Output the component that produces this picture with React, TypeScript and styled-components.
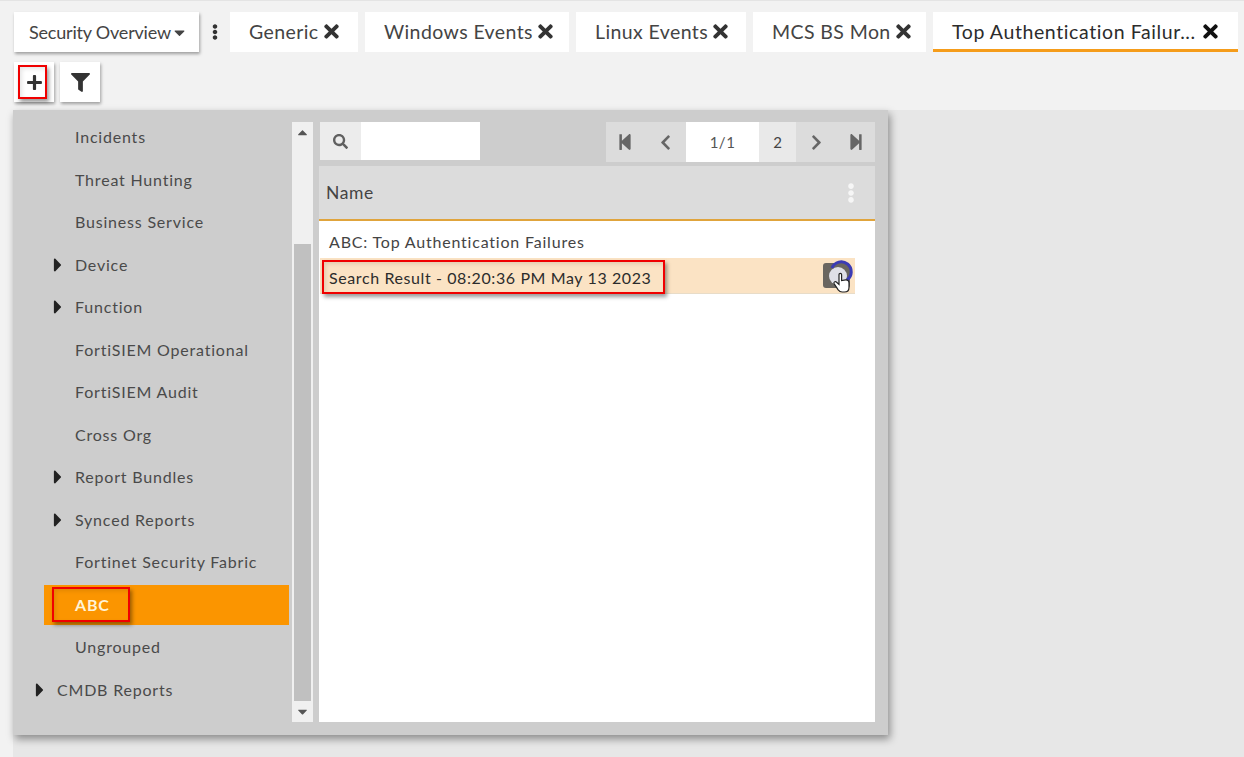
import { createGlobalStyle } from "styled-components"
import styled from "styled-components"
import {
  FaCaretDown,
  FaCaretRight,
  FaCaretUp,
  FaChevronLeft,
  FaChevronRight,
  FaEllipsisV,
  FaFilter,
  FaPlus,
  FaSearch,
  FaStepBackward,
  FaStepForward,
  FaTimes,
} from "react-icons/fa"

const tabs = [
  { label: "Generic", width: 128 },
  { label: "Windows Events", width: 204 },
  { label: "Linux Events", width: 170 },
  { label: "MCS BS Mon", width: 173 },
]

const treeItems = [
  { label: "Incidents" },
  { label: "Threat Hunting" },
  { label: "Business Service" },
  { label: "Device", arrow: true },
  { label: "Function", arrow: true },
  { label: "FortiSIEM Operational" },
  { label: "FortiSIEM Audit" },
  { label: "Cross Org" },
  { label: "Report Bundles", arrow: true },
  { label: "Synced Reports", arrow: true },
  { label: "Fortinet Security Fabric" },
  { label: "ABC", selected: true },
  { label: "Ungrouped" },
  { label: "CMDB Reports", arrow: true, top: true },
]

const App = () => {
  return (
    <>
      <GlobalStyle />
      <Page>
        <TabBar>
          <MenuButton>
            Security Overview
            <FaCaretDown size={17} />
          </MenuButton>
          <Kebab>
            <FaEllipsisV size={16} />
          </Kebab>
          {tabs.map((tab) => (
            <Tab key={tab.label} $width={tab.width}>
              {tab.label}
              <FaTimes size={21} />
            </Tab>
          ))}
          <ActiveTab>
            <span>Top Authentication Failur...</span>
            <FaTimes size={21} />
          </ActiveTab>
        </TabBar>

        <ActionRow>
          <SquareButton>
            <FaPlus size={17} />
            <Callout $left={4} $top={3} $width={29} $height={34} />
          </SquareButton>
          <SquareButton>
            <FaFilter size={19} />
          </SquareButton>
        </ActionRow>

        <Body>
          <Panel>
            <Tree>
              {treeItems.map((item) => (
                <TreeRow key={item.label} $selected={item.selected} $top={item.top}>
                  <TreeLabel>
                    {item.arrow && (
                      <Arrow>
                        <FaCaretRight size={22} />
                      </Arrow>
                    )}
                    {item.label}
                  </TreeLabel>
                  {item.selected && <Callout $left={8} $top={2} $width={78} $height={35} />}
                </TreeRow>
              ))}
            </Tree>

            <Scrollbar>
              <ScrollArrow>
                <FaCaretUp size={15} />
              </ScrollArrow>
              <ScrollTrack>
                <ScrollThumb />
              </ScrollTrack>
              <ScrollArrow>
                <FaCaretDown size={15} />
              </ScrollArrow>
            </Scrollbar>

            <Content>
              <Toolbar>
                <SearchBox>
                  <SearchIcon>
                    <FaSearch size={15} />
                  </SearchIcon>
                  <SearchInput />
                </SearchBox>
                <Pager>
                  <PagerButton $width={38}>
                    <FaStepBackward size={18} />
                  </PagerButton>
                  <PagerButton $width={42}>
                    <FaChevronLeft size={17} />
                  </PagerButton>
                  <PageInput>1/1</PageInput>
                  <PageSize>2</PageSize>
                  <PagerButton $width={40}>
                    <FaChevronRight size={17} />
                  </PagerButton>
                  <PagerButton $width={39}>
                    <FaStepForward size={18} />
                  </PagerButton>
                </Pager>
              </Toolbar>

              <GridHeader>
                Name
                <FaEllipsisV size={20} color="#f6f6f6" />
              </GridHeader>
              <GridBody>
                <GridRow>ABC: Top Authentication Failures</GridRow>
                <GridRow $hover>
                  Search Result - 08:20:36 PM May 13 2023
                  <Callout $left={2} $top={2} $width={343} $height={34} />
                  <RowAction>
                    <svg width="32" height="36" viewBox="0 0 32 36" overflow="visible">
                      <rect x="0" y="5" width="27" height="25" rx="3" fill="#6a6660" />
                      <circle cx="15" cy="18" r="9" fill="#dfdfe6" />
                      <path d="M9 10a10 10 0 1 1 15 12" fill="none" stroke="#3b3bb5" strokeWidth="3" />
                      <path
                        d="M16 16.5c0-1.6 2.6-1.6 2.6 0v6l4-.6c2-.2 3.4 1 3.4 3v4.5c0 2.4-1.6 4.6-4.6 4.6h-2.2c-1.8 0-3-.8-4-2.2l-4-6c-1-1.6 1-3 2.4-1.6l2.4 2.2z"
                        fill="#fff"
                        stroke="#222"
                        strokeWidth="1.2"
                      />
                    </svg>
                  </RowAction>
                </GridRow>
              </GridBody>
            </Content>
          </Panel>
        </Body>
      </Page>
    </>
  )
}

const GlobalStyle = createGlobalStyle`
    html, body {
        margin: 0;
        padding: 0;
        background: #f2f2f2;
    }

    body {
        font-family: Lato, "Liberation Sans", sans-serif;
        color: #444;
    }
`

const Page = styled.div`
    width: 1244px;
    height: 757px;
    overflow: hidden;
    display: flex;
    flex-direction: column;
    border-top: 1px solid #e4e4e4;
    box-sizing: border-box;
`

const TabBar = styled.div`
    display: flex;
    align-items: stretch;
    height: 40px;
    margin: 11px 0 0 14px;
`

const MenuButton = styled.div`
    width: 185px;
    box-sizing: border-box;
    display: flex;
    align-items: center;
    padding-left: 15px;
    background: #fff;
    font-size: 18px;
    letter-spacing: -0.2px;
    white-space: nowrap;
    box-shadow: 1px 2px 3px rgba(0, 0, 0, 0.35);
`

const Kebab = styled.div`
    width: 31px;
    display: flex;
    align-items: center;
    justify-content: center;
    color: #333;
`

const Tab = styled.div<{ $width: number }>`
    width: ${(p) => p.$width}px;
    margin-right: 7px;
    box-sizing: border-box;
    display: flex;
    align-items: center;
    gap: 2px;
    padding: 0 0 2px 19px;
    background: #fff;
    font-size: 19.5px;
    letter-spacing: 0.4px;
    white-space: nowrap;

    > svg {
        color: #333;
        margin-top: 1px;
    }
`

const ActiveTab = styled.div`
    width: 305px;
    box-sizing: border-box;
    display: flex;
    align-items: center;
    justify-content: space-between;
    padding: 1px 17px 0 19px;
    background: #fff;
    border-bottom: 3px solid #f59c1a;
    font-size: 19.5px;
    letter-spacing: 0.6px;
    color: #2c2c2c;

    > svg {
        color: #111;
    }
`

const ActionRow = styled.div`
    display: flex;
    gap: 6px;
    margin: 10px 0 8px 14px;
`

const SquareButton = styled.div`
    position: relative;
    width: 40px;
    height: 40px;
    display: flex;
    align-items: center;
    justify-content: center;
    background: #fff;
    color: #333;
    box-shadow: 1px 2px 3px rgba(0, 0, 0, 0.35);
`

const Callout = styled.div<{ $left: number; $top: number; $width: number; $height: number }>`
    position: absolute;
    left: ${(p) => p.$left}px;
    top: ${(p) => p.$top}px;
    width: ${(p) => p.$width}px;
    height: ${(p) => p.$height}px;
    box-sizing: border-box;
    border: 2px solid #f00000;
    box-shadow: 2px 3px 4px rgba(0, 0, 0, 0.4), inset 2px 2px 4px rgba(0, 0, 0, 0.1);
    pointer-events: none;
`

const Body = styled.div`
    flex: 1;
    margin-left: 13px;
    background: #e7e7e7;
`

const Panel = styled.div`
    width: 875px;
    height: 625px;
    display: flex;
    align-items: flex-start;
    background: #cdcdcd;
    box-shadow: 2px 4px 8px rgba(0, 0, 0, 0.4);
`

const Tree = styled.div`
    width: 279px;
    flex-shrink: 0;
    box-sizing: border-box;
    padding: 7px 3px 0 31px;
    display: flex;
    flex-direction: column;
    gap: 2.5px;
`

const TreeRow = styled.div<{ $selected?: boolean; $top?: boolean }>`
    position: relative;
    height: 40px;
    display: flex;
    align-items: center;
    padding-left: ${(p) => (p.$top ? 13 : 31)}px;
    background: ${(p) => (p.$selected ? "#fb9500" : "transparent")};
    color: ${(p) => (p.$selected ? "#fff3d6" : "#4a4a4a")};
    font-size: 16px;
    font-weight: ${(p) => (p.$selected ? 700 : 400)};
    letter-spacing: 0.8px;
`

const TreeLabel = styled.span`
    position: relative;
    padding-bottom: 1px;
`

const Arrow = styled.span`
    position: absolute;
    left: -28px;
    top: 50%;
    transform: translateY(-50%);
    display: flex;
    color: #222;
`

const Scrollbar = styled.div`
    width: 21px;
    height: 600px;
    margin-top: 12px;
    flex-shrink: 0;
    display: flex;
    flex-direction: column;
    background: #f0f0f0;
`

const ScrollArrow = styled.div`
    height: 21px;
    display: flex;
    align-items: center;
    justify-content: center;
    color: #555;
`

const ScrollTrack = styled.div`
    flex: 1;
    display: flex;
    flex-direction: column;
    justify-content: flex-end;
    padding: 0 2px;
`

const ScrollThumb = styled.div`
    height: 457px;
    background: #c0c0c0;
`

const Content = styled.div`
    width: 556px;
    height: 600px;
    margin: 12px 0 0 6px;
    flex-shrink: 0;
    display: flex;
    flex-direction: column;
`

const Toolbar = styled.div`
    height: 44px;
    display: flex;
    justify-content: space-between;
    align-items: flex-start;
`

const SearchBox = styled.div`
    display: flex;
    height: 38px;
    margin-left: 1px;
`

const SearchIcon = styled.div`
    width: 41px;
    display: flex;
    align-items: center;
    justify-content: center;
    background: #ececec;
    color: #606060;
`

const SearchInput = styled.div`
    width: 119px;
    background: #fff;
`

const Pager = styled.div`
    height: 40px;
    display: flex;
    background: #dcdcdc;
    color: #666;
`

const PagerButton = styled.div<{ $width: number }>`
    width: ${(p) => p.$width}px;
    display: flex;
    align-items: center;
    justify-content: center;
`

const PageInput = styled.div`
    width: 73px;
    display: flex;
    align-items: center;
    justify-content: center;
    background: #fff;
    font-size: 15px;
    letter-spacing: 0.5px;
    color: #555;
`

const PageSize = styled.div`
    width: 37px;
    display: flex;
    align-items: center;
    justify-content: center;
    background: #e9e9e9;
    font-size: 15px;
    color: #444;
`

const GridHeader = styled.div`
    height: 53px;
    flex-shrink: 0;
    display: flex;
    align-items: center;
    justify-content: space-between;
    padding: 0 14px 0 7px;
    background: #dcdcdc;
    border-bottom: 2px solid #e0a43c;
    font-size: 17.5px;
    letter-spacing: 0.6px;
    color: #444;
`

const GridBody = styled.div`
    flex: 1;
    background: #fff;
    padding: 10px 20px 0 1px;
`

const GridRow = styled.div<{ $hover?: boolean }>`
    position: relative;
    box-sizing: border-box;
    height: ${(p) => (p.$hover ? 36 : 20)}px;
    margin-bottom: ${(p) => (p.$hover ? 0 : 7)}px;
    display: flex;
    align-items: center;
    padding: ${(p) => (p.$hover ? "4px 0 0 9px" : "0 0 0 9px")};
    background: ${(p) => (p.$hover ? "#fbe3c4" : "transparent")};
    border-bottom: ${(p) => (p.$hover ? "1px solid #e8dcc8" : "none")};
    color: ${(p) => (p.$hover ? "#2c2c2c" : "#444")};
    font-size: 16px;
    letter-spacing: ${(p) => (p.$hover ? 0.6 : 0.8)}px;
`

const RowAction = styled.div`
    position: absolute;
    right: 0;
    top: 0;
    height: 36px;
`

export default App
